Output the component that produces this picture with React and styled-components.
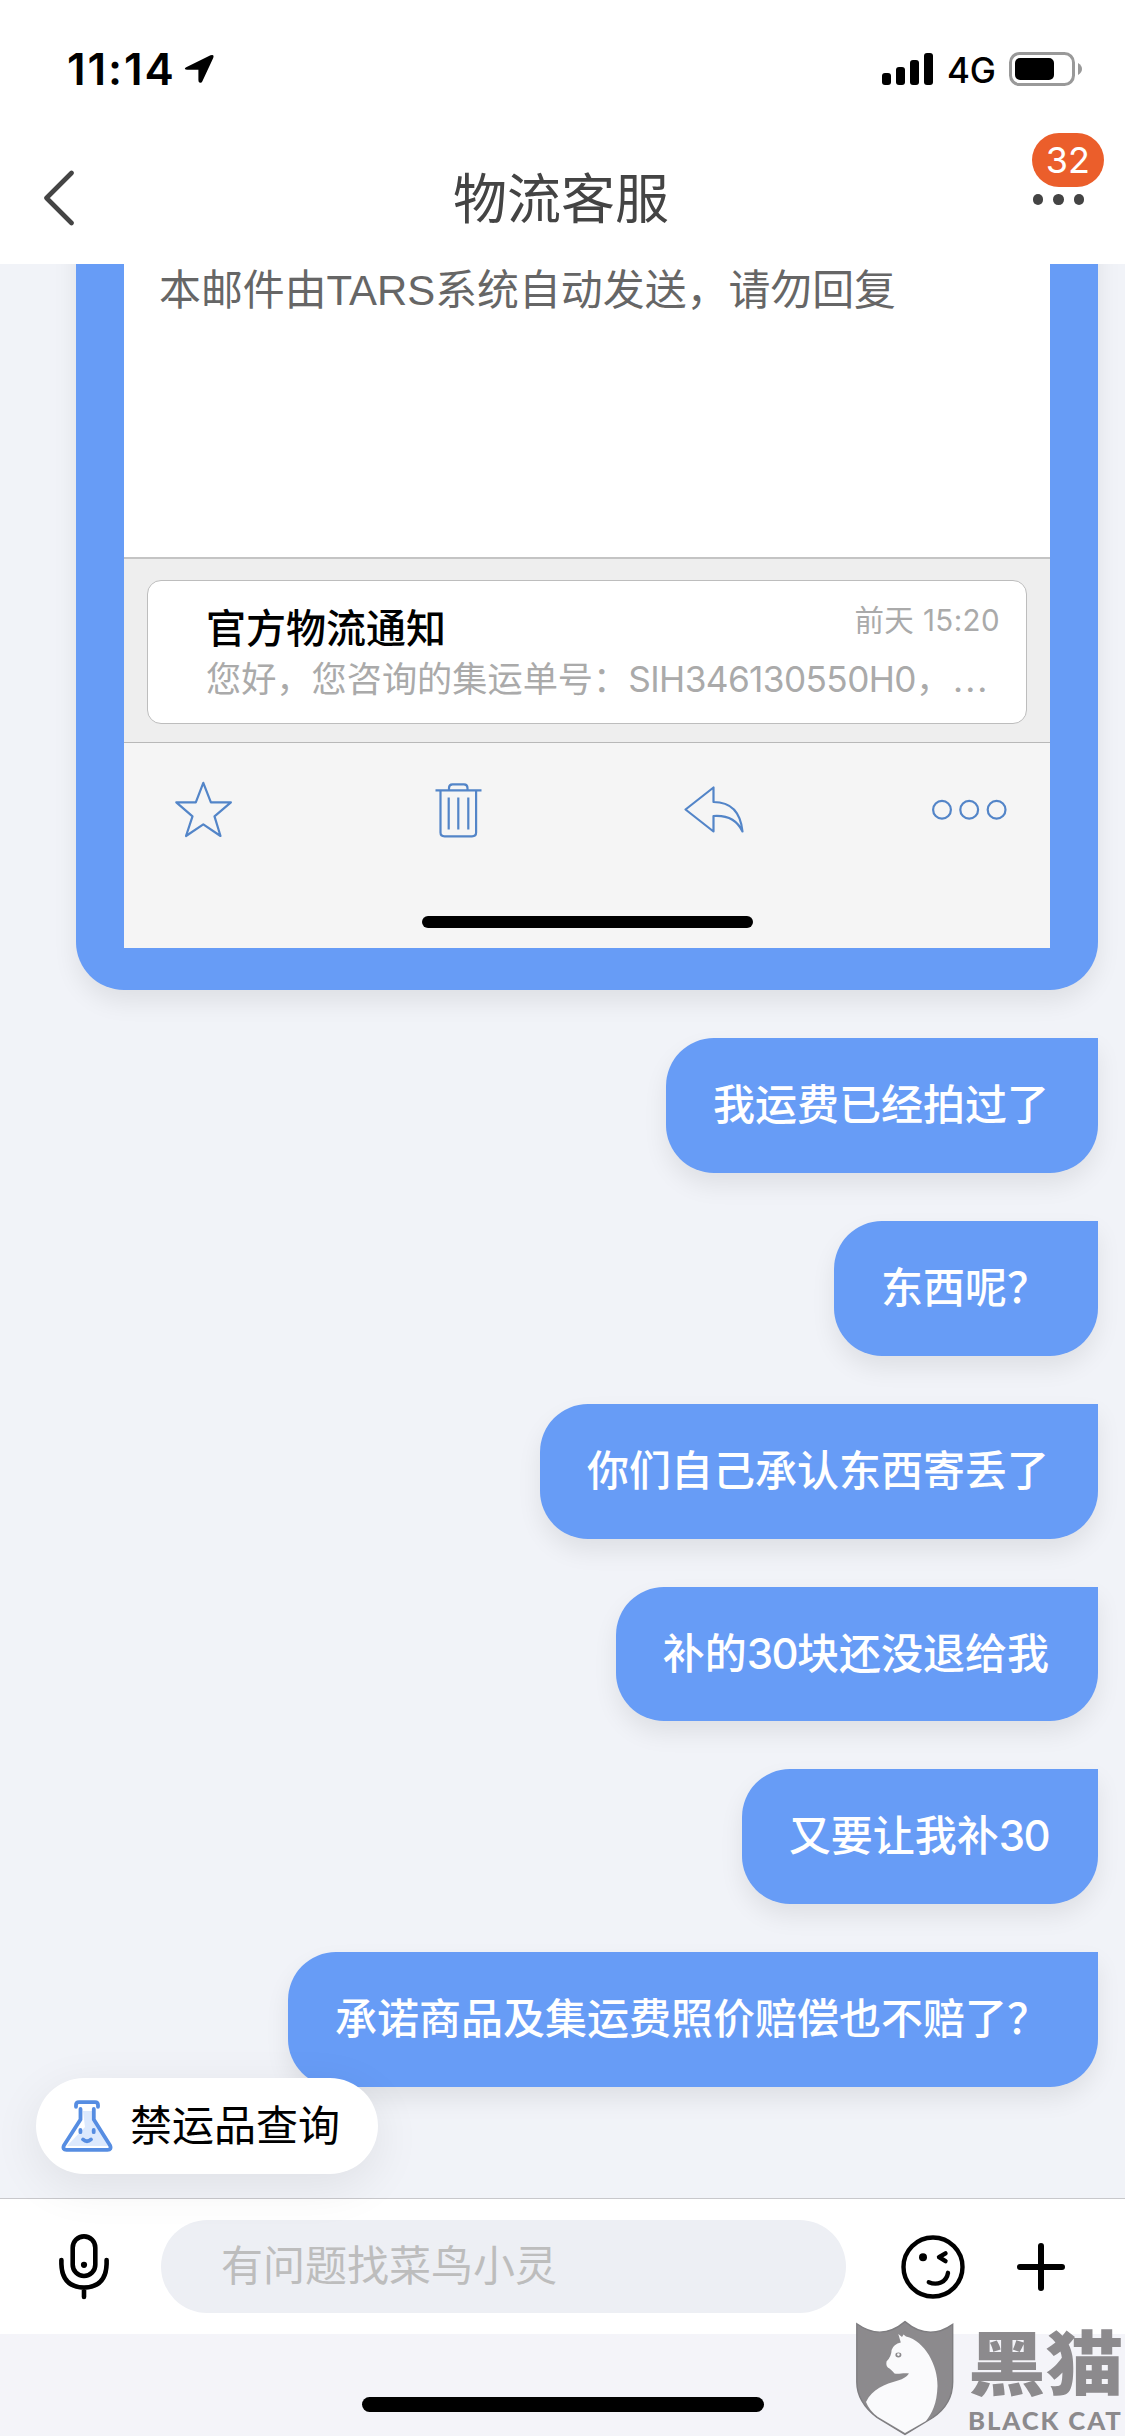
import React from 'react'
import styled, { createGlobalStyle } from 'styled-components'

const messages = [
  { id: 1, text: '我运费已经拍过了' },
  { id: 2, text: '东西呢？' },
  { id: 3, text: '你们自己承认东西寄丢了' },
  { id: 4, text: '补的30块还没退给我' },
  { id: 5, text: '又要让我补30' },
  { id: 6, text: '承诺商品及集运费照价赔偿也不赔了？' },
]

const bars = [12, 18, 25, 32]

const StatusBar = () => {
  return (
    <StatusWrapper>
      <Clock>11:14</Clock>
      <svg width='31' height='30' viewBox='0 0 31 30'>
        <path
          d='M2.2 13.2 26.5 1.3Q30.6 0 29.2 4L18.4 27.2Q17.4 29.4 15.5 28.6Q14.4 28 14.4 26V15.8H3.4Q1 15.8 .8 14.6Q.8 13.8 2.2 13.2Z'
          fill='#000'
        />
      </svg>
      <StatusRight>
        <Signal>
          {bars.map((height) => (
            <SignalBar key={height} $height={height} />
          ))}
        </Signal>
        <Network>4G</Network>
        <svg width='74' height='34' viewBox='0 0 74 34'>
          <rect
            x='1.5'
            y='1.5'
            width='63'
            height='31'
            rx='9'
            fill='none'
            stroke='#999'
            strokeWidth='3'
          />
          <rect x='6' y='6' width='39' height='22' rx='5' fill='#000' />
          <path d='M69 11Q73 13.5 73 17T69 23Z' fill='#999' />
        </svg>
      </StatusRight>
    </StatusWrapper>
  )
}

const Header = () => {
  return (
    <HeaderWrapper>
      <svg width='32' height='56' viewBox='0 0 32 56'>
        <path
          d='M28.5 3 3.5 28 28.5 53'
          fill='none'
          stroke='#444'
          strokeWidth='4.6'
          strokeLinecap='round'
          strokeLinejoin='round'
        />
      </svg>
      <Title>物流客服</Title>
      <More>
        <Dot />
        <Dot />
        <Dot />
        <Badge>32</Badge>
      </More>
    </HeaderWrapper>
  )
}

const MailShot = () => {
  return (
    <ImageBubble>
      <Mail>
        <MailBody>本邮件由TARS系统自动发送，请勿回复</MailBody>
        <MailThread>
          <MailCard>
            <MailCardTop>
              <MailSender>官方物流通知</MailSender>
              <MailTime>前天 15:20</MailTime>
            </MailCardTop>
            <MailPreview>
              您好，您咨询的集运单号：
              <MailNumber>SIH346130550H0</MailNumber>，<Dots>...</Dots>
            </MailPreview>
          </MailCard>
        </MailThread>
        <MailTools>
          <svg width='75' height='58' viewBox='0 0 58 58'>
            <path d='M28.8 2.8 36.4 22.3H56.4L40 36.4 46 56 28.8 44.4 11.5 56 18 36.4 1.8 22.3H21.3Z' />
          </svg>
          <svg width='75' height='58' viewBox='0 0 48 58'>
            <path d='M1 10.4H47M14.5 10.4V8Q14.5 4.4 18 4.4H29.5Q33 4.4 33 8V10.4M6 10.4V52.5Q6 56.3 10 56.3H37.5Q41.6 56.3 41.6 52.5V10.4M14.2 17.5V49.5M23.8 17.5V49.5M33.8 17.5V49.5' />
          </svg>
          <svg width='75' height='58' viewBox='0 0 62 58'>
            <path d='M2 29.5 30 7.5V22Q56 22 59 51.5Q51 34.5 30 36V51.5Z' />
          </svg>
          <svg width='75' height='58' viewBox='0 0 75 58'>
            <circle cx='10' cy='29.7' r='8.9' />
            <circle cx='37.2' cy='29.7' r='8.9' />
            <circle cx='64.6' cy='29.7' r='8.9' />
          </svg>
        </MailTools>
        <HomeBar $width='331px' $height='12px' />
      </Mail>
    </ImageBubble>
  )
}

const Message = ({ text }) => {
  return (
    <Bubble>
      {text.split(/(\d+)/).map((part, index) => {
        return index % 2 ? <Digits key={index}>{part}</Digits> : part
      })}
    </Bubble>
  )
}

const Flask = () => (
  <svg width='52' height='52' viewBox='0 0 52 52'>
    <path d='M20 7H33V19L49 47H4L20 19Z' fill='#fff' />
    <path d='M22 11H33V19L47 46H6L24 27Z' fill='#dce9fd' />
    <g fill='none' stroke='#568de2' strokeWidth='3.8' strokeLinecap='round' strokeLinejoin='round'>
      <path d='M15 6.8V5Q15 2.2 18 2.2H34Q37 2.2 37 5V6.8' />
      <path d='M19.5 9V19.5L2.9 45.5Q1.2 49.8 5.5 49.8H46.5Q50.8 49.8 49.1 45.5L32.8 19.5V9' />
      <path d='M22 39.4Q26 43 30 39.4' />
      <path d='M19.4 30V32.2M32.7 30V32.2' />
    </g>
  </svg>
)

const InputBar = () => {
  return (
    <InputWrapper>
      <svg width='50' height='66' viewBox='0 0 50 66'>
        <g fill='none' stroke='#000' strokeWidth='4.6' strokeLinecap='round'>
          <rect x='13.7' y='2.4' width='22.6' height='39.6' rx='11.3' />
          <path d='M2.4 26V30Q3 53 25 53.6Q47 53 47.6 30V26M25 53.6V63' />
        </g>
        <circle cx='25' cy='30.8' r='3.1' />
      </svg>
      <Field>有问题找菜鸟小灵</Field>
      <svg width='64' height='64' viewBox='0 0 64 64'>
        <g fill='none' stroke='#000' strokeWidth='4.4' strokeLinecap='round' strokeLinejoin='round'>
          <circle cx='32' cy='32' r='29.5' />
          <path d='M44.5 18.3 38 22.2 44.5 26.1' />
          <path d='M27.8 47.2C36 50.6 45.5 47.5 47 37.8' />
        </g>
        <circle cx='22' cy='22.3' r='4' />
      </svg>
      <svg width='50' height='50' viewBox='0 0 50 50'>
        <path d='M4 25H46M25 4V46' stroke='#000' strokeWidth='6' strokeLinecap='round' />
      </svg>
    </InputWrapper>
  )
}

const BlackCat = () => {
  return (
    <Watermark>
      <svg width='98' height='116' viewBox='0 0 98 116'>
        <path
          d='M.8 3.8Q25.5 21.5 49 1.6Q72.5 21.5 96.7 4.4V62Q96.7 84 77 97.5L49 114.5 21 97.5Q.8 82 .8 62Z'
          fill='#8c8a8d'
          stroke='#7e7d80'
          strokeWidth='1.4'
        />
        <path
          d='M42.3 14 46 17 47.5 14.6 50 16.6C69 21 82 46 81.5 66C81 84 76 93 70 101L49 113 22 97Q13.5 91 10 82C16 69 29 64 42 60.5Q50 58 53 53.5C47 52.5 43 54.5 38.5 53.5Q36 50.5 33.5 48.5Q29.5 47 30.5 41.5Q35.5 36.5 35.6 30Q37.5 24 44.8 22.5Z'
          fill='#fafafc'
        />
        <ellipse cx='42.4' cy='35' rx='3' ry='2.4' fill='#8c8a8d' />
        <circle cx='42.4' cy='34.6' r='1.3' fill='#fafafc' />
      </svg>
      <Brand>
        <BrandName>黑猫</BrandName>
        <BrandLatin>BLACK CAT</BrandLatin>
      </Brand>
    </Watermark>
  )
}

const App = () => {
  return (
    <Screen>
      <GlobalStyle />
      <StatusBar />
      <Header />
      <Chat>
        <MailShot />
        {messages.map((message) => (
          <Message key={message.id} {...message} />
        ))}
      </Chat>
      <InputBar />
      <Bottom>
        <HomeBar $width='402px' $height='15px' />
      </Bottom>
      <Shortcut>
        <Flask />
        禁运品查询
      </Shortcut>
      <BlackCat />
    </Screen>
  )
}

const GlobalStyle = createGlobalStyle`
  * {
    box-sizing: border-box;
  }

  body {
    margin: 0;
    font-family: Inter, 'Noto Sans CJK SC', sans-serif;
  }

  svg {
    display: block;
    flex-shrink: 0;
  }
`

const Screen = styled.div`
  position: relative;
  display: flex;
  flex-direction: column;
  width: 1125px;
  height: 2436px;
  overflow: hidden;
  background: #fff;
`

const StatusWrapper = styled.div`
  display: flex;
  align-items: center;
  height: 138px;
  padding: 0 42px 0 67px;
`

const Clock = styled.span`
  width: 117px;
  font-size: 44px;
  font-weight: 600;
  letter-spacing: 1.9px;
  white-space: nowrap;
`

const StatusRight = styled.div`
  display: flex;
  align-items: center;
  margin-left: auto;
`

const Signal = styled.div`
  display: flex;
  align-items: flex-end;
  gap: 5px;
  height: 32px;
`

const SignalBar = styled.span`
  width: 9px;
  height: ${({ $height }) => $height}px;
  border-radius: 3px;
  background: #000;
`

const Network = styled.span`
  width: 76px;
  padding-left: 14px;
  padding-top: 2px;
  font-size: 35px;
  font-weight: 500;
  letter-spacing: -0.2px;
`

const HeaderWrapper = styled.header`
  display: flex;
  align-items: center;
  justify-content: space-between;
  height: 126px;
  padding: 0 41px 6px 43px;
`

const Title = styled.h1`
  margin: 3px 0 0 14px;
  color: #444;
  font-size: 54px;
  font-weight: 400;
  line-height: 1;
`

const More = styled.div`
  position: relative;
  display: flex;
  gap: 10px;
  margin-top: 3px;
`

const Dot = styled.span`
  width: 10.4px;
  height: 10.4px;
  border-radius: 50%;
  background: #444;
`

const Badge = styled.span`
  position: absolute;
  left: -1px;
  bottom: 18px;
  width: 72px;
  height: 54px;
  border-radius: 27px;
  background: #eb5e2b;
  color: #fff;
  font-size: 36px;
  line-height: 54px;
  text-align: center;
`

const Chat = styled.main`
  display: flex;
  flex-direction: column;
  align-items: flex-end;
  justify-content: flex-end;
  gap: 48px;
  height: 1934px;
  padding: 0 27px 111px;
  overflow: hidden;
  background: #f1f3f8;
`

const Bubble = styled.div`
  flex-shrink: 0;
  height: 134.8px;
  padding: 0 49px 0 47px;
  border-radius: 48px 0 48px 48px;
  background: #679cf6;
  box-shadow: 0 12px 24px rgba(0, 0, 0, 0.08);
  color: #fff;
  font-size: 42px;
  font-weight: 500;
  line-height: 133px;
  white-space: nowrap;
`

const Digits = styled.span`
  letter-spacing: -1.6px;
`

const ImageBubble = styled(Bubble)`
  height: auto;
  padding: 42px 48px;
  line-height: 1;
`

const Mail = styled.div`
  width: 926px;
  height: 744px;
  background: #f5f5f5;
`

const MailBody = styled.div`
  height: 353px;
  padding: 64px 35px 0;
  background: #fff;
  color: #666;
  font-family: 'Liberation Sans', 'Noto Sans CJK SC', sans-serif;
  font-size: 41.9px;
  font-weight: 400;
  line-height: 46px;
`

const MailThread = styled.div`
  height: 186px;
  padding: 21px 23px 0;
  border-top: 2px solid #c4c4c4;
  border-bottom: 1px solid #b8b8b8;
  background: #eee;
`

const MailCard = styled.div`
  height: 144px;
  padding: 22px 26px 0 58px;
  border: 1.5px solid #bdbdbd;
  border-radius: 14px;
  background: #fff;
`

const MailCardTop = styled.div`
  display: flex;
  justify-content: space-between;
`

const MailSender = styled.span`
  color: #000;
  font-size: 40px;
  font-weight: 500;
  line-height: 52px;
`

const MailTime = styled.span`
  color: #aaa;
  font-size: 29.5px;
  font-weight: 400;
  line-height: 34px;
  letter-spacing: 0.4px;
`

const MailPreview = styled.div`
  color: #aaa;
  font-size: 35.2px;
  font-weight: 400;
  line-height: 48px;
`

const MailNumber = styled.span`
  letter-spacing: -0.6px;
`

const Dots = styled.span`
  margin-left: 2px;
  letter-spacing: 2px;
`

const MailTools = styled.div`
  display: flex;
  justify-content: space-between;
  height: 173px;
  padding: 37px 43px 0 42px;

  svg {
    fill: none;
    stroke: #5385c8;
    stroke-width: 2.2;
    stroke-linejoin: round;
  }
`

const HomeBar = styled.div`
  width: ${({ $width }) => $width};
  height: ${({ $height }) => $height};
  margin: 0 auto;
  border-radius: 8px;
  background: #000;
`

const InputWrapper = styled.div`
  display: flex;
  align-items: center;
  height: 136px;
  padding: 0 59px;
  border-top: 1px solid #c8c8cc;
  background: #fff;
`

const Field = styled.div`
  width: 685px;
  height: 93px;
  margin: 0 55px 0 52px;
  padding-left: 60px;
  border-radius: 47px;
  background: #edeff4;
  color: #bdbdbd;
  font-size: 42px;
  line-height: 91px;

  & + svg {
    margin-right: 51px;
  }
`

const Bottom = styled.div`
  flex: 1;
  padding-top: 63px;
  background: #f4f4f9;
`

const Shortcut = styled.div`
  position: absolute;
  left: 36px;
  bottom: 262px;
  display: flex;
  align-items: center;
  gap: 17px;
  width: 342px;
  height: 96px;
  padding-left: 25px;
  border-radius: 48px;
  background: #fff;
  box-shadow: 0 12px 48px rgba(0, 0, 0, 0.08);
  color: #000;
  font-size: 42px;
  line-height: 1;
`

const Watermark = styled.div`
  position: absolute;
  right: 0;
  bottom: 0;
  display: flex;
  width: 269px;
  height: 116px;
  color: #8c8a8d;
`

const Brand = styled.div`
  margin-left: 14px;
`

const BrandName = styled.div`
  margin-top: 9px;
  font-size: 70px;
  font-weight: 900;
  line-height: 72px;
  white-space: nowrap;
  transform: scaleX(1.11);
  transform-origin: left;
`

const BrandLatin = styled.div`
  margin-top: 7px;
  font-family: Lato, sans-serif;
  font-size: 24px;
  font-weight: 900;
  line-height: 26px;
  letter-spacing: 1.8px;
  white-space: nowrap;
  transform: scaleX(1.07);
  transform-origin: left;
`

export default App
